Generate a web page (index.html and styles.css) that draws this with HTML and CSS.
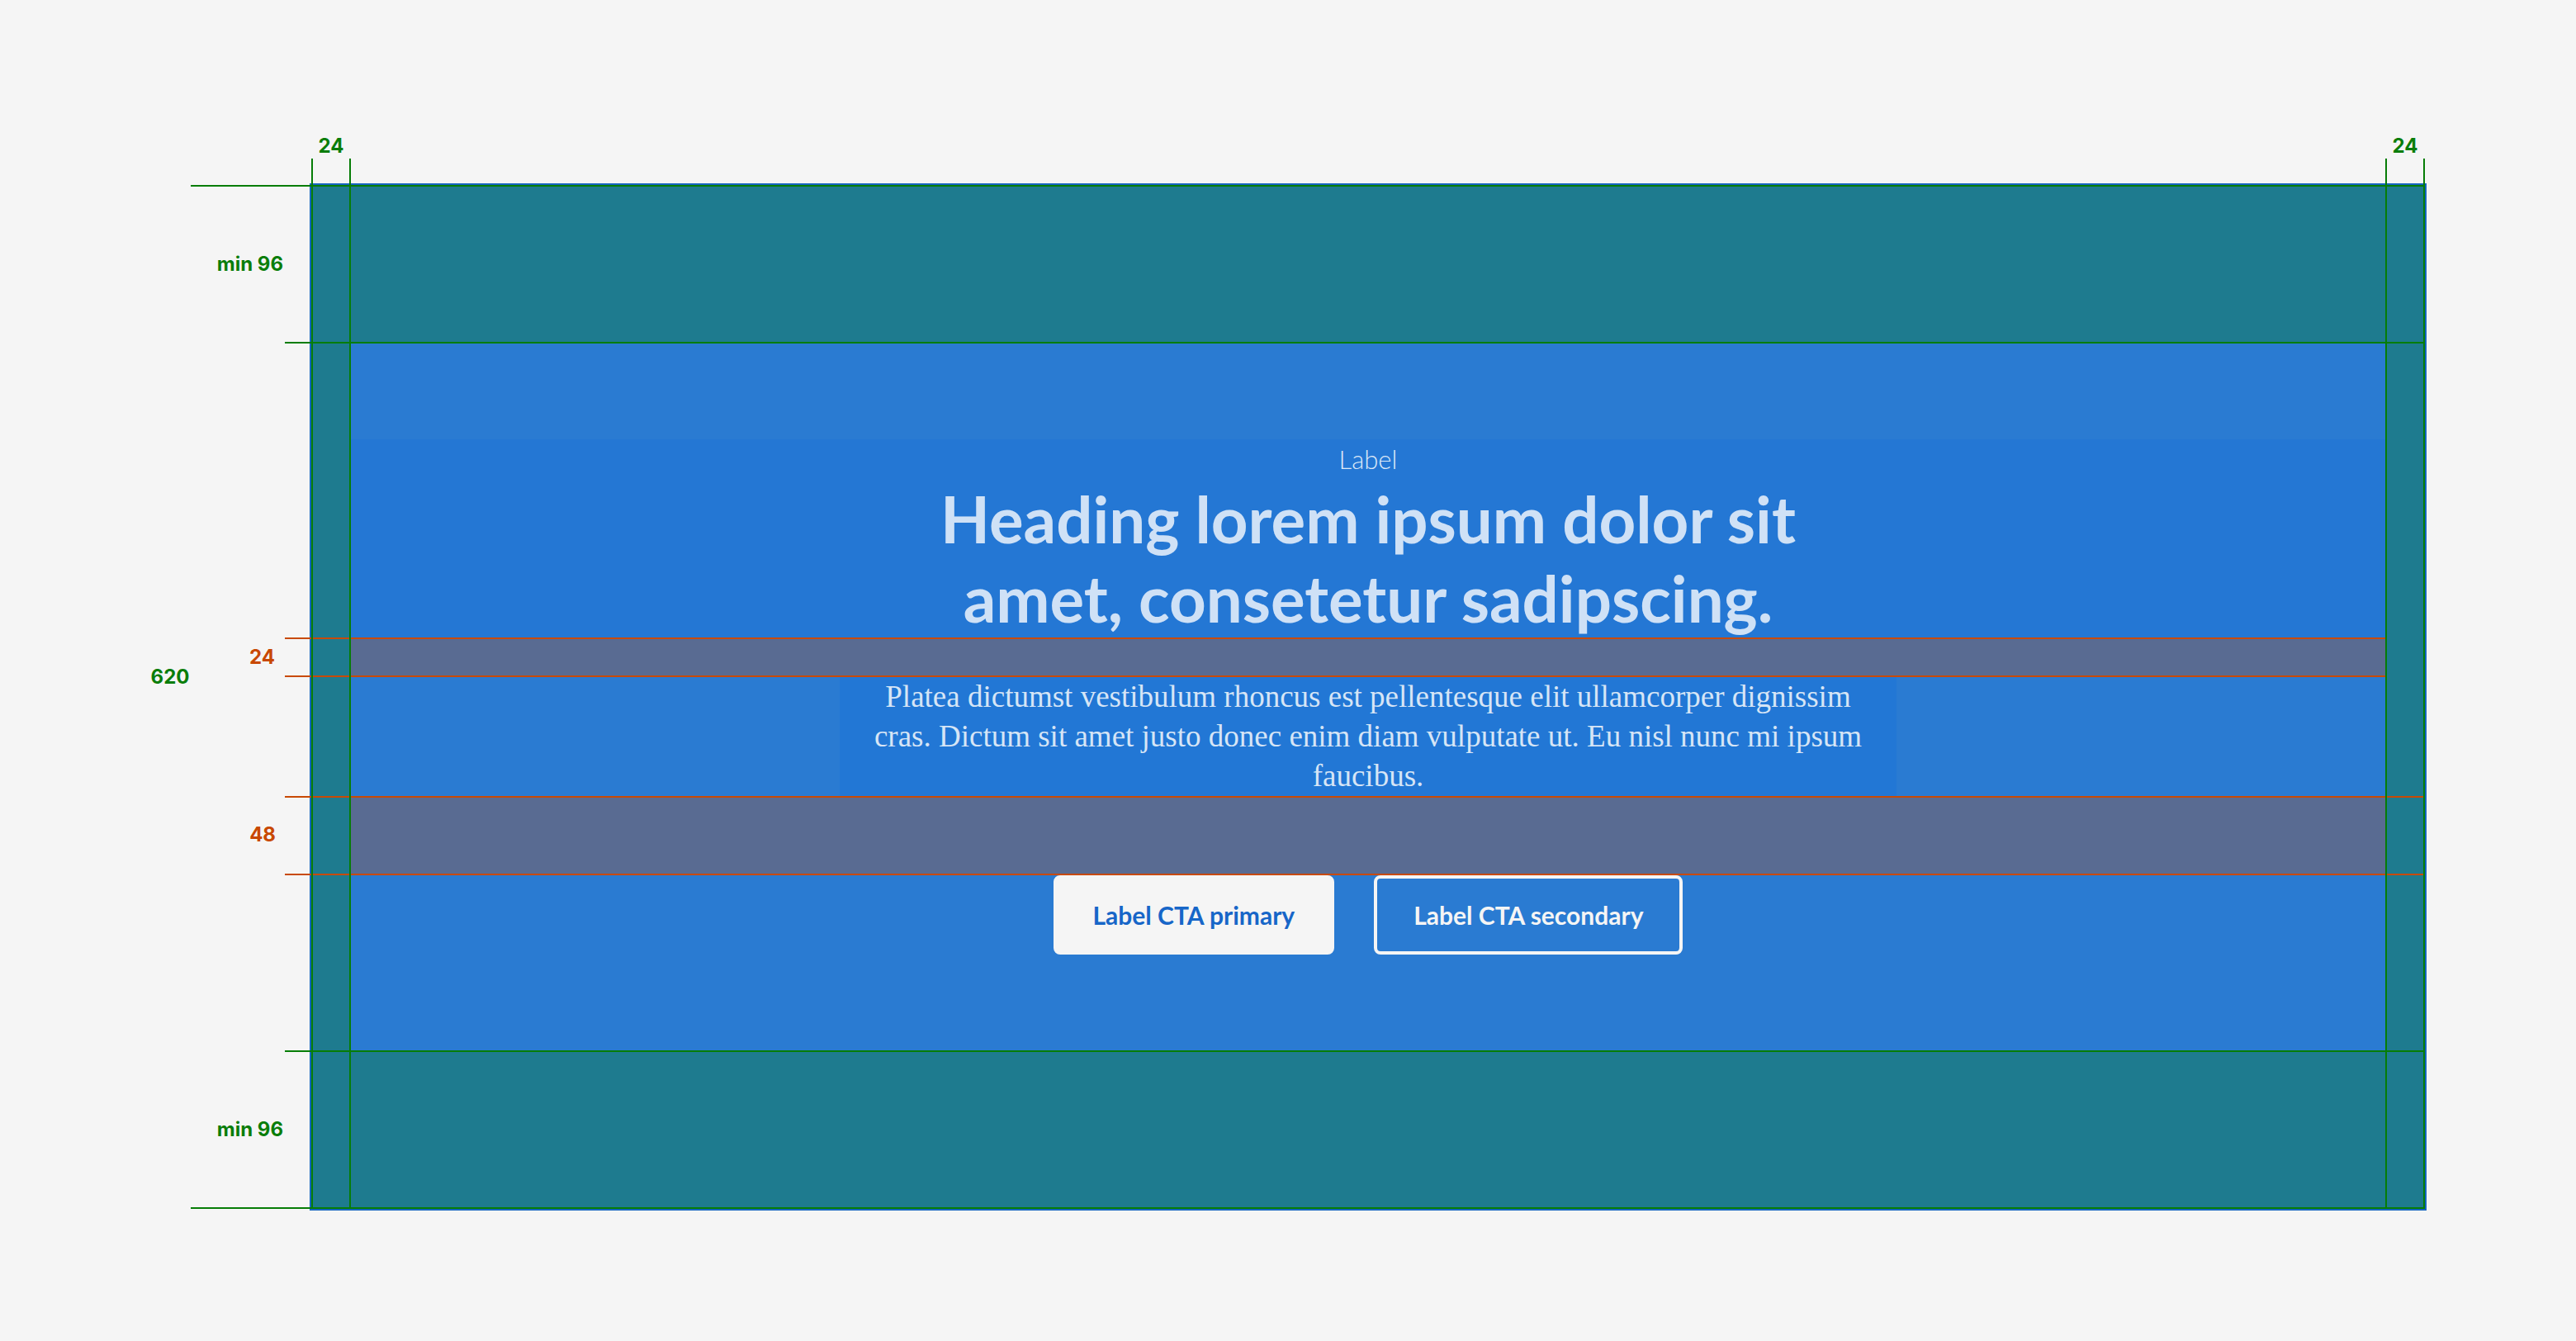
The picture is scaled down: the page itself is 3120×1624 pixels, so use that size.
FILE: index.html
```html
<!DOCTYPE html>
<html lang="en">
<head>
<meta charset="utf-8">
<title>Hero section spec</title>
<link rel="stylesheet" href="styles.css">
</head>
<body>
<div class="canvas">
  <section class="frame">
    <div class="content">
      <header class="head">
        <p class="label">Label</p>
        <h1 class="heading">Heading lorem ipsum dolor sit amet, consetetur sadipscing.</h1>
      </header>
      <div class="gap gap-24"></div>
      <p class="body-text">Platea dictumst vestibulum rhoncus est pellentesque elit ullamcorper dignissim cras. Dictum sit amet justo donec enim diam vulputate ut. Eu nisl nunc mi ipsum faucibus.</p>
      <div class="gap gap-48"></div>
      <div class="actions">
        <a class="btn btn-primary" href="#">Label CTA primary</a>
        <a class="btn btn-secondary" href="#">Label CTA secondary</a>
      </div>
    </div>
  </section>

  <div class="annot">
    <div class="oline o1"></div>
    <div class="oline o2"></div>
    <div class="oline o3"></div>
    <div class="oline o4"></div>

    <div class="gline h-top"></div>
    <div class="gline h-pad-top"></div>
    <div class="gline h-pad-bottom"></div>
    <div class="gline h-bottom"></div>
    <div class="gline v v1"></div>
    <div class="gline v v2"></div>
    <div class="gline v v3"></div>
    <div class="gline v v4"></div>

    <span class="tag green t-left24">24</span>
    <span class="tag green t-right24">24</span>
    <span class="tag green t-min-top">min 96</span>
    <span class="tag green t-min-bottom">min 96</span>
    <span class="tag green t-620">620</span>
    <span class="tag orange t-o24">24</span>
    <span class="tag orange t-o48">48</span>
  </div>
</div>
</body>
</html>
```

FILE: styles.css
```css
html, body {
  margin: 0;
  padding: 0;
  background: #f5f5f5;
}

.canvas {
  position: relative;
  width: 3120px;
  height: 1624px;
  box-sizing: border-box;
  padding: 222px 181px 158px 375px;
}

.frame {
  box-sizing: border-box;
  width: 2564px;
  border: 2px solid #1565c0;
  background: #1e7b8f;
  padding: 192px 48px;
}

.content {
  min-height: 856px;
  background: #2a7bd2;
  display: flex;
  flex-direction: column;
  align-items: center;
  justify-content: center;
}

.head {
  align-self: stretch;
  background: #2477d4;
  text-align: center;
}

.label {
  margin: 0;
  font-family: Lato, "Noto Sans", sans-serif;
  font-weight: 300;
  font-size: 31px;
  line-height: 48px;
  color: #dce9f8;
}

.heading {
  margin: 0 auto;
  max-width: 1100px;
  font-family: Lato, "Noto Sans", sans-serif;
  font-weight: 700;
  font-size: 78px;
  line-height: 96px;
  color: #cfe1f6;
}

.gap {
  align-self: stretch;
  background: #596b92;
}

.gap-24 { height: 48px; }
.gap-48 { height: 96px; }

.body-text {
  box-sizing: border-box;
  width: 1280px;
  margin: 0;
  padding: 0 24px;
  background: #2277d5;
  font-family: "Liberation Serif", "Times New Roman", serif;
  font-size: 37px;
  line-height: 48px;
  text-align: center;
  color: #d6e5f6;
}

.actions {
  display: flex;
  gap: 48px;
}

.btn {
  box-sizing: border-box;
  height: 96px;
  display: flex;
  align-items: center;
  justify-content: center;
  padding: 0 44px;
  border: 4px solid #f5f5f5;
  border-radius: 8px;
  font-family: Lato, "Noto Sans", sans-serif;
  font-weight: 700;
  font-size: 30px;
  text-decoration: none;
}

.btn-primary {
  background: #f5f5f5;
  color: #1766c8;
}

.btn-secondary {
  background: transparent;
  color: #f5f5f5;
}

/* annotation overlay */
.annot {
  position: absolute;
  inset: 0;
  pointer-events: none;
}

.gline, .oline {
  position: absolute;
}

.gline { background: #067d06; }
.oline { background: #c84a04; height: 2px; }

.h-top { top: 224px; left: 231px; width: 2706px; height: 2px; }
.h-pad-top { top: 414px; left: 345px; width: 2592px; height: 2px; }
.h-pad-bottom { top: 1272px; left: 345px; width: 2592px; height: 2px; }
.h-bottom { top: 1462px; left: 231px; width: 2706px; height: 2px; }

.v { top: 192px; height: 1272px; width: 2px; }
.v1 { left: 377px; }
.v2 { left: 423px; }
.v3 { left: 2889px; }
.v4 { left: 2935px; }

.o1 { top: 772px; left: 345px; width: 2544px; }
.o2 { top: 818px; left: 345px; width: 2544px; }
.o3 { top: 964px; left: 345px; width: 2590px; }
.o4 { top: 1058px; left: 345px; width: 2590px; }

.tag {
  position: absolute;
  font-family: Inter, "Liberation Sans", sans-serif;
  font-weight: 700;
  font-size: 24px;
  line-height: 24px;
  white-space: nowrap;
}

.green { color: #0a7d0a; }
.orange { color: #c84800; }

.t-left24 { top: 165px; left: 361px; width: 80px; text-align: center; }
.t-right24 { top: 165px; left: 2873px; width: 80px; text-align: center; }
.t-min-top { top: 308px; left: 203px; width: 140px; text-align: right; }
.t-min-bottom { top: 1356px; left: 203px; width: 140px; text-align: right; }
.t-620 { top: 808px; left: 146px; width: 120px; text-align: center; }
.t-o24 { top: 784px; left: 213px; width: 120px; text-align: right; }
.t-o48 { top: 999px; left: 214px; width: 120px; text-align: right; }
```
